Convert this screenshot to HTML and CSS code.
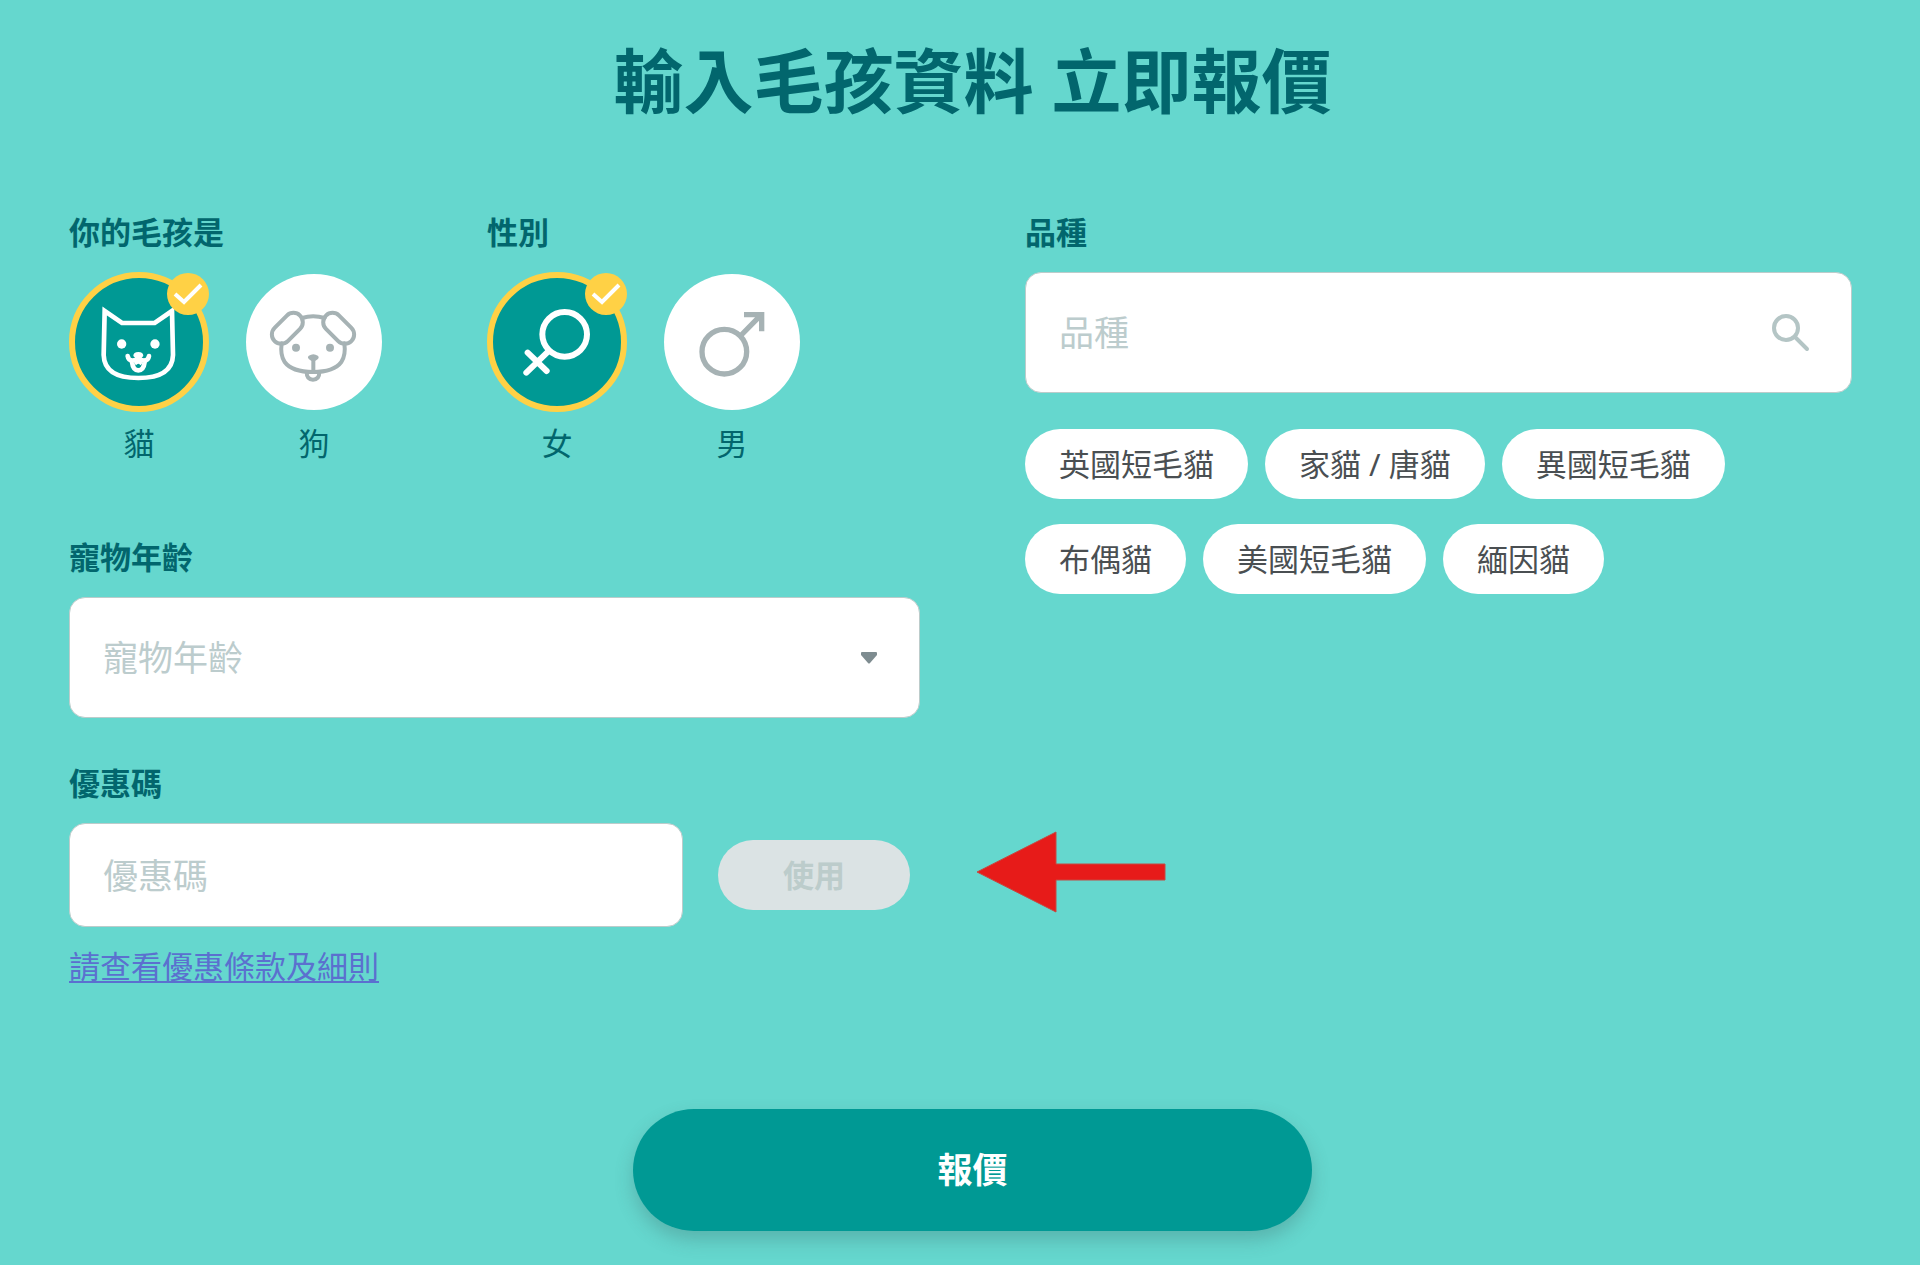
FILE: index.html
```html
<!DOCTYPE html>
<html lang="zh-Hant">
<head>
<meta charset="utf-8">
<meta name="viewport" content="width=device-width, initial-scale=1">
<title>輸入毛孩資料 立即報價</title>
<link rel="stylesheet" href="styles.css">
</head>
<body>
<main class="page">
  <h1 class="title">輸入毛孩資料 立即報價</h1>
  <form class="quote">
    <div class="columns">
      <div class="column">
        <div class="choices">
          <fieldset class="choice">
            <legend class="label">你的毛孩是</legend>
            <div class="options">
              <label class="option">
                <span class="disc">
                  <input class="radio" type="radio" name="pet" value="cat" checked>
                  <svg class="icon cat" viewBox="57 216 420 420" aria-hidden="true">
                    <path d="M164 333 L216 369 H314 L366 333 L369 465 Q367 534 265 534 Q163 534 161 465 Z"/>
                    <circle class="solid" cx="215" cy="432" r="14"/><circle class="solid" cx="315" cy="432" r="14"/>
                    <path class="solid" d="M250 468 Q250 456 265 456 Q280 456 280 468 L265 484 Z"/>
                    <path d="M233 468 Q235 482 248 482 Q260 482 265 472 Q270 482 282 482 Q295 482 297 468 M246 486 Q249 511 265 511 Q281 511 284 486"/>
                    <path class="solid" d="M252 488 L265 480 L278 488 L272 496 Q265 486 258 496 Z"/>
                  </svg>
                  <svg class="badge" viewBox="0 0 42 42" aria-hidden="true"><circle cx="21" cy="21" r="21"/><path d="M8 21l9 8 17-17"/></svg>
                </span>
                <span class="caption">貓</span>
              </label>
              <label class="option">
                <span class="disc">
                  <input class="radio" type="radio" name="pet" value="dog">
                  <svg class="icon" viewBox="580 216 420 420" aria-hidden="true">
                    <path d="M754 354 Q787 344 822 354 M693 430 Q688 466 702 486 Q724 516 787 516 Q850 516 872 486 Q886 466 881 430"/>
                    <rect x="-54" y="-28" width="108" height="56" rx="28" transform="translate(710 385) rotate(-45)"/>
                    <rect x="-54" y="-28" width="108" height="56" rx="28" transform="translate(864 385) rotate(45)"/>
                    <circle class="solid" cx="736" cy="443" r="12"/><circle class="solid" cx="838" cy="443" r="12"/>
                    <path d="M778 472 Q788 465 798 472 L788 480 Z M788 480 V514 M768 517 Q768 539 787 539 Q806 539 806 517"/>
                  </svg>
                </span>
                <span class="caption">狗</span>
              </label>
            </div>
          </fieldset>
          <fieldset class="choice">
            <legend class="label">性別</legend>
            <div class="options">
              <label class="option">
                <span class="disc">
                  <input class="radio" type="radio" name="sex" value="female" checked>
                  <svg class="icon female" viewBox="52 216 420 420" aria-hidden="true">
                    <circle cx="285" cy="403" r="67"/><path d="M236 454 L170 518 M174 458 L231 513"/>
                  </svg>
                  <svg class="badge" viewBox="0 0 42 42" aria-hidden="true"><circle cx="21" cy="21" r="21"/><path d="M8 21l9 8 17-17"/></svg>
                </span>
                <span class="caption">女</span>
              </label>
              <label class="option">
                <span class="disc">
                  <input class="radio" type="radio" name="sex" value="male">
                  <svg class="icon male" viewBox="575 216 420 420" aria-hidden="true">
                    <circle cx="762" cy="455" r="67"/><path d="M810 408 L873 344 M821 344 H874 V394"/>
                  </svg>
                </span>
                <span class="caption">男</span>
              </label>
            </div>
          </fieldset>
        </div>

        <div class="field">
          <label class="label" for="age">寵物年齡</label>
          <div class="control">
            <select class="box" id="age"><option>寵物年齡</option></select>
            <svg class="caret" viewBox="0 0 16 12" aria-hidden="true"><path d="M1 0H15Q16 0 16 1V3L9 11Q8 12 7 11L0 3V1Q0 0 1 0Z"/></svg>
          </div>
        </div>

        <div class="field promo">
          <label class="label" for="promo">優惠碼</label>
          <div class="promo-row">
            <input class="box promo-box" id="promo" type="text" placeholder="優惠碼">
            <button class="apply" type="button" disabled>使用</button>
            <svg class="pointer" viewBox="0 0 190 82" aria-hidden="true"><path d="M1 41L80 1V33H189V49H80V81Z"/></svg>
          </div>
          <a class="terms" href="#terms">請查看優惠條款及細則</a>
        </div>
      </div>

      <div class="column breed">
        <label class="label" for="breed">品種</label>
        <div class="control">
          <input class="box" id="breed" type="text" placeholder="品種">
          <svg class="search" viewBox="0 0 38 38" aria-hidden="true"><circle cx="14" cy="14" r="12"/><path d="M24 24L35 35"/></svg>
        </div>
        <div class="chips">
          <button class="chip" type="button">英國短毛貓</button>
          <button class="chip" type="button">家貓 / 唐貓</button>
          <button class="chip" type="button">異國短毛貓</button>
          <button class="chip" type="button">布偶貓</button>
          <button class="chip" type="button">美國短毛貓</button>
          <button class="chip" type="button">緬因貓</button>
        </div>
      </div>
    </div>
    <button class="submit" type="submit">報價</button>
  </form>
</main>
</body>
</html>
```
FILE: styles.css
```css
* { box-sizing: border-box; }

body {
  margin: 0;
  background: #65d7ce;
  color: #02666d;
  font: 31px/46px "Noto Sans", "Noto Sans CJK TC", sans-serif;
}

button, input, select { font: inherit; margin: 0; }

.page { padding: 33px 44px 33px 69px; }

.title {
  margin: 0 0 80px;
  font-size: 70px;
  line-height: 96px;
  font-weight: 700;
  text-align: center;
}

.quote { display: flex; flex-direction: column; align-items: center; gap: 120px; }

.columns {
  display: grid;
  grid-template-columns: repeat(2, minmax(0, 1fr));
  gap: 105px;
  width: 100%;
}

.breed { padding-right: 24px; }

.label {
  display: block;
  margin-bottom: 17px;
  padding: 0;
  font-weight: 700;
}

.choices { display: flex; flex-wrap: wrap; gap: 103px; }
.choice { margin: 0; padding: 0; border: 0; min-width: 0; }
.options { display: flex; gap: 35px; }
.option { display: flex; flex-direction: column; align-items: center; gap: 8px; cursor: pointer; }

.disc { position: relative; display: grid; place-items: center; width: 140px; height: 140px; }

.radio {
  appearance: none;
  width: 136px;
  height: 136px;
  border-radius: 50%;
  background: #fff;
}
.radio:checked {
  width: 140px;
  height: 140px;
  border: 6px solid #ffd145;
  background: #009994;
}

.icon {
  position: absolute;
  inset: 0;
  pointer-events: none;
  fill: none;
  stroke: #a6b2b4;
  stroke-width: 12;
  stroke-linecap: round;
  stroke-linejoin: round;
}
.radio:checked + .icon { stroke: #fff; }
.icon .solid { fill: #a6b2b4; stroke: none; }
.radio:checked + .icon .solid { fill: #fff; }
.cat { stroke-width: 14; stroke-linejoin: miter; }
.female { stroke-width: 18; }
.male { stroke-width: 16; stroke-linecap: butt; stroke-linejoin: miter; }

.badge { position: absolute; top: 1px; right: 0; width: 42px; height: 42px; pointer-events: none; fill: #ffd145; }
.badge path { fill: none; stroke: #fff; stroke-width: 4; }

.field { margin-top: 68px; }
.promo { margin-top: 42px; }

.control { position: relative; }

.box {
  display: block;
  width: 100%;
  height: 121px;
  padding: 0 33px;
  border: 1px solid #bccccb;
  border-radius: 16px;
  background: #fff;
  color: #bccccd;
  font-size: 35px;
  appearance: none;
}
.box::placeholder { color: #bccccd; opacity: 1; }

.caret { position: absolute; top: 55px; right: 43px; width: 16px; height: 12px; fill: #7e8c90; pointer-events: none; }
.search {
  position: absolute;
  top: 42px;
  right: 42px;
  width: 38px;
  height: 38px;
  fill: none;
  stroke: #b4c5c5;
  stroke-width: 4;
  stroke-linecap: round;
}

.promo-row { position: relative; display: flex; align-items: center; gap: 35px; padding-right: 10px; }
.promo-box { flex: 1; min-width: 0; height: 104px; }

.apply {
  width: 192px;
  height: 70px;
  padding: 0;
  border: 0;
  border-radius: 35px;
  background: #dbe3e4;
  color: #bccccb;
  font-weight: 700;
}

.pointer { position: absolute; left: 100%; top: 8px; width: 190px; height: 82px; margin-left: 56px; fill: #e71b19; stroke: #c44a42; stroke-width: 1; }

.terms { display: inline-block; margin-top: 16px; color: #5b70cf; text-decoration-thickness: 2px; text-underline-offset: 3px; }

.chips { display: flex; flex-wrap: wrap; gap: 25px 17px; margin-top: 36px; }
.chip {
  height: 70px;
  padding: 0 34px;
  border: 0;
  border-radius: 35px;
  background: #fff;
  color: #4a4f52;
}

.submit {
  width: 679px;
  max-width: 100%;
  height: 122px;
  border: 0;
  border-radius: 61px;
  background: #009994;
  color: #fff;
  font-size: 35px;
  font-weight: 700;
  box-shadow: 0 9px 18px rgba(60, 100, 100, 0.3);
}
```
